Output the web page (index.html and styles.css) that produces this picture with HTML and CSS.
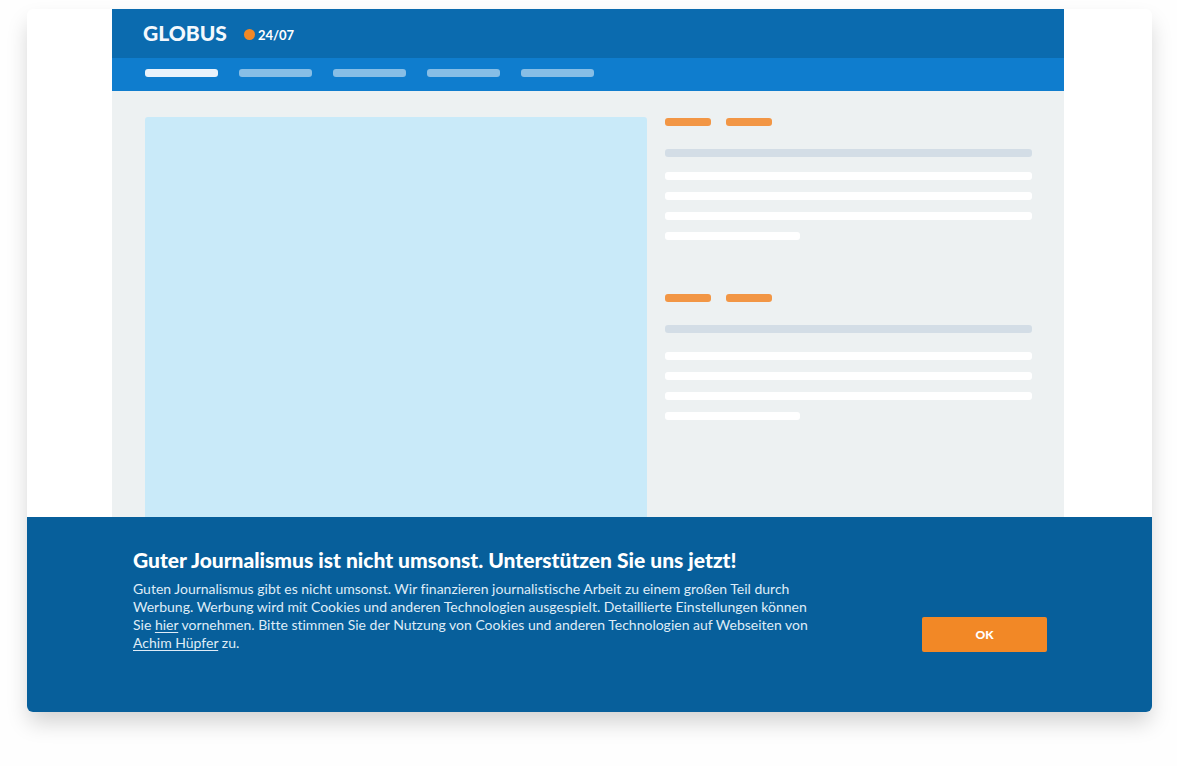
FILE: index.html
```html
<!DOCTYPE html>
<html lang="de">
<head>
<meta charset="utf-8">
<meta name="viewport" content="width=device-width, initial-scale=1">
<title>Globus 24/07</title>
<link rel="stylesheet" href="styles.css">
</head>
<body>
<div class="window">
  <div class="site">
    <header class="masthead">
      <span class="brand">GLOBUS</span>
      <span class="edition"><span class="dot"></span>24/07</span>
    </header>
    <div class="nav">
      <span class="tab tab-active"></span>
      <span class="tab"></span>
      <span class="tab"></span>
      <span class="tab"></span>
      <span class="tab"></span>
    </div>
    <main class="content">
      <div class="hero"></div>
      <div class="teasers">
        <article class="teaser">
          <div class="tags"><span class="tag"></span><span class="tag"></span></div>
          <div class="headline"></div>
          <div class="lines">
            <div class="line"></div>
            <div class="line"></div>
            <div class="line"></div>
            <div class="line line-short"></div>
          </div>
        </article>
        <article class="teaser teaser-loose">
          <div class="tags"><span class="tag"></span><span class="tag"></span></div>
          <div class="headline"></div>
          <div class="lines">
            <div class="line"></div>
            <div class="line"></div>
            <div class="line"></div>
            <div class="line line-short"></div>
          </div>
        </article>
      </div>
    </main>
  </div>
  <section class="consent">
    <div class="consent-copy">
      <h1 class="consent-title">Guter Journalismus ist nicht umsonst. Unterstützen Sie uns jetzt!</h1>
      <p class="consent-text">Guten Journalismus gibt es nicht umsonst. Wir finanzieren journalistische Arbeit zu einem großen Teil durch<br>
      Werbung. Werbung wird mit Cookies und anderen Technologien ausgespielt. Detaillierte Einstellungen können<br>
      Sie <a href="#">hier</a> vornehmen. Bitte stimmen Sie der Nutzung von Cookies und anderen Technologien auf Webseiten von<br>
      <a href="#">Achim Hüpfer</a> zu.</p>
    </div>
    <button class="consent-ok" type="button">OK</button>
  </section>
</div>
</body>
</html>
```

FILE: styles.css
```css
* {
  box-sizing: border-box;
}

body {
  margin: 0;
  min-height: 100vh;
  padding: 9px 25px 54px 27px;
  display: flex;
  background: #fefefe;
  font-family: Lato, "Liberation Sans", sans-serif;
  font-variant-ligatures: none;
  color: #fff;
}

.window {
  flex: 1;
  display: flex;
  flex-direction: column;
  overflow: hidden;
  border-radius: 6px;
  background: #fff;
  box-shadow: 0 12px 22px -2px rgba(0, 0, 0, 0.18);
}

.site {
  flex: 1;
  display: flex;
  flex-direction: column;
  margin: 0 88px 0 85px;
  background: #edf1f2;
}

.masthead {
  display: flex;
  align-items: center;
  gap: 17px;
  height: 49px;
  padding: 0 31px 2px;
  background: #0b6baf;
}

.brand {
  font-size: 21px;
  font-weight: 900;
  color: #f3f8fd;
}

.edition {
  display: flex;
  align-items: center;
  gap: 3px;
  padding-top: 4px;
  font-size: 13px;
  line-height: 16px;
  font-weight: 700;
}

.dot {
  width: 11px;
  height: 11px;
  border-radius: 50%;
  background: #f28826;
}

.nav {
  display: flex;
  gap: 21px;
  padding: 11px 33px 14px;
  background: #0f7dce;
}

.tab {
  width: 73px;
  height: 8px;
  border-radius: 3px;
  background: #87bee6;
}

.tab-active {
  background: #e9f2fb;
}

.content {
  flex: 1;
  display: grid;
  grid-template-columns: 502fr 367fr;
  gap: 18px;
  padding: 26px 32px 0 33px;
}

.hero {
  border-radius: 3px 3px 0 0;
  background: #c9eaf9;
}

.teasers {
  display: flex;
  flex-direction: column;
  gap: 54px;
  padding-top: 1px;
}

.tags {
  display: flex;
  gap: 15px;
}

.tag {
  width: 46px;
  height: 8px;
  border-radius: 3px;
  background: #f29645;
}

.headline {
  height: 8px;
  margin: 23px 0 15px;
  border-radius: 3px;
  background: #d3dde6;
}

.teaser-loose .headline {
  margin-bottom: 19px;
}

.lines {
  display: flex;
  flex-direction: column;
  gap: 12px;
}

.line {
  height: 8px;
  border-radius: 3px;
  background: #fff;
}

.line-short {
  width: 135px;
}

.consent {
  display: flex;
  align-items: flex-end;
  justify-content: space-between;
  gap: 24px;
  padding: 31px 105px 60px 106px;
  background: #075f9b;
}

.consent-title {
  margin: 0 0 8px;
  font-size: 21px;
  line-height: 24px;
  font-weight: 900;
}

.consent-text {
  margin: 0;
  font-size: 14px;
  line-height: 18px;
  color: #dfecf7;
}

.consent-text a {
  color: inherit;
  text-underline-offset: 2px;
}

.consent-ok {
  flex: none;
  width: 125px;
  height: 35px;
  border: 0;
  border-radius: 2px;
  background: #f28826;
  color: #fff;
  font: 900 12px/16px Lato, "Liberation Sans", sans-serif;
}
```
